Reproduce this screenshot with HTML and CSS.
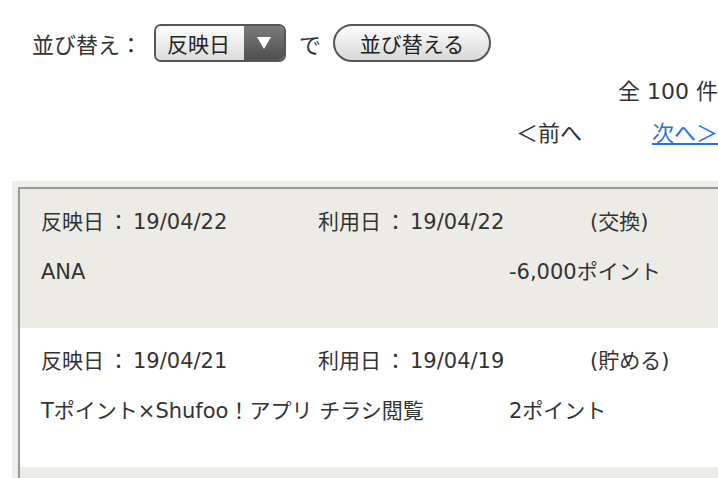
FILE: index.html
```html
<!DOCTYPE html>
<html lang="ja">
<head>
    <meta charset="UTF-8">
    <meta name="viewport" content="width=device-width, initial-scale=1.0">
    <title>ポイント履歴</title>
    <link rel="stylesheet" href="styles.css">
</head>
<body>
    <div class="page">
        <!-- 並び替え -->
        <div class="sort-bar">
            <span class="sort-label">並び替え：</span>
            <div class="select">
                <span class="select-value">反映日</span>
                <span class="select-arrow">
                    <svg width="14" height="12" viewBox="0 0 14 12"><polygon points="0,0 14,0 7,12" fill="#fff"/></svg>
                </span>
            </div>
            <span class="sort-de">で</span>
            <button class="sort-button">並び替える</button>
        </div>

        <div class="total">全 100 件</div>

        <div class="pager">
            <span class="pager-prev">＜前へ</span>
            <a href="#" class="pager-next">次へ＞</a>
        </div>

        <!-- 履歴一覧 -->
        <div class="history">
            <div class="history-list">
                <div class="history-item">
                    <div class="item-line">
                        <span class="col-date">反映日<span class="colon">：</span>19/04/22</span>
                        <span class="col-use">利用日<span class="colon">：</span>19/04/22</span>
                        <span class="col-type">(交換)</span>
                    </div>
                    <div class="item-line">
                        <span class="col-name">ANA</span>
                        <span class="col-point">-6,000ポイント</span>
                    </div>
                </div>
                <div class="history-item">
                    <div class="item-line">
                        <span class="col-date">反映日<span class="colon">：</span>19/04/21</span>
                        <span class="col-use">利用日<span class="colon">：</span>19/04/19</span>
                        <span class="col-type">(貯める)</span>
                    </div>
                    <div class="item-line">
                        <span class="col-name">Tポイント×Shufoo！アプリ チラシ閲覧</span>
                        <span class="col-point">2ポイント</span>
                    </div>
                </div>
            </div>
        </div>
    </div>
</body>
</html>
```

FILE: styles.css
```css
body {
    margin: 0;
    padding: 0;
    font-family: "DejaVu Sans", "Noto Sans CJK JP", sans-serif;
    font-size: 21px;
    color: #333;
    background-color: #fff;
    overflow: hidden;
}
.page {
    width: 718px;
    height: 478px;
}
.sort-bar {
    display: flex;
    align-items: center;
    padding: 24px 0 0 32px;
    height: 38px;
    font-size: 22px;
}
.sort-label {
    margin-right: 12px;
}
.select {
    display: flex;
    height: 34px;
    border: 2px solid #555;
    border-radius: 7px;
    overflow: hidden;
}
.select-value {
    display: flex;
    align-items: center;
    padding: 0 0 0 11px;
    width: 77px;
    background: linear-gradient(#fdfdfd, #dcdcdc);
    font-size: 21px;
    color: #222;
}
.select-arrow {
    display: flex;
    align-items: center;
    justify-content: center;
    width: 40px;
    background: linear-gradient(#7a7a7a, #4f4f4f);
}
.sort-de {
    margin: 0 12px 0 13px;
}
.sort-button {
    height: 38px;
    width: 158px;
    padding: 0;
    border: 2px solid #555;
    border-radius: 19px;
    background: linear-gradient(#fdfdfd, #d8d8d8);
    font-family: inherit;
    font-size: 21px;
    color: #222;
}
.total {
    text-align: right;
    font-size: 22px;
    line-height: 30px;
    margin-top: 15px;
    white-space: nowrap;
}
.pager {
    display: flex;
    justify-content: flex-end;
    gap: 70px;
    font-size: 22px;
    line-height: 30px;
    margin-top: 12px;
    white-space: nowrap;
}
.pager-next {
    color: #2a72de;
    text-decoration: underline;
}
.history {
    margin: 32px 0 0 12px;
    padding: 6px 0 0 6px;
    background-color: #efeeea;
    height: 300px;
}
.history-list {
    border-top: 2px solid #999;
    border-left: 2px solid #999;
    width: 760px;
    height: 300px;
    background-color: #ecebe6;
}
.history-item {
    padding: 18px 0 41px 21px;
    background-color: #ecebe6;
}
.history-item:nth-child(even) {
    background-color: #fff;
}
.item-line {
    display: flex;
    line-height: 30px;
    margin-bottom: 20px;
    white-space: nowrap;
}
.item-line:last-child {
    margin-bottom: 0;
}
.colon {
    padding: 0 4px 0 4px;
}
.col-date {
    width: 277px;
}
.col-use {
    width: 272px;
}
.col-name {
    width: 468px;
}
```
